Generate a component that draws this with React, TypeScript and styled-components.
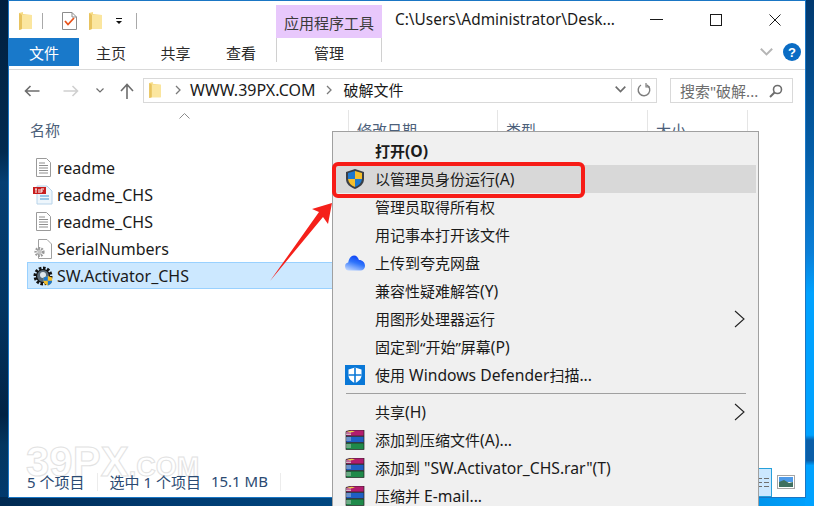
import React from 'react'
import styled, { createGlobalStyle } from 'styled-components'

const UI_FONT = `"Noto Sans", "Noto Sans CJK SC", sans-serif`

const GlobalStyle = createGlobalStyle`
  html, body {
    margin: 0;
    padding: 0;
    overflow: hidden;
  }
  body {
    font-family: ${UI_FONT};
    font-size: 15px;
  }
`

const Desktop = styled.div`
  position: relative;
  width: 814px;
  height: 506px;
  overflow: hidden;
  box-sizing: border-box;
  padding: 0 8px 8px;
  background:
    linear-gradient(180deg, #02396f 0%, #045ea8 30%, #0a7fd8 50%, #00a2ff 58%, #00a2ff 86%, #0a5ea8 87%, #0a5ea8 91%, #00a2ff 92%) right / 9px 100% no-repeat,
    linear-gradient(90deg, #002a52 0%, #003a70 20%, #00538f 60%, #00a2ff 100%) bottom / 100% 9px no-repeat,
    linear-gradient(180deg, #01203f 0%, #012a50 30%, #063f73 36%, #033562 60%, #012345 82%, #03365f 88%, #003a70 100%);
`

const Win = styled.div`
  height: 498px;
  box-sizing: border-box;
  border: 1px solid #1a76c4;
  background: #fff;
  display: flex;
  flex-direction: column;
`

const Latin = styled.span`
  font-size: 16px;
  line-height: 1;
`

const Spacer = styled.span<{ $w: number }>`
  width: ${p => p.$w}px;
  flex: none;
`

const TitleBar = styled.div`
  height: 37px;
  display: flex;
  align-items: flex-end;
  flex: none;
`

const Quick = styled.div`
  width: 267px;
  height: 37px;
  display: flex;
  align-items: center;
  padding: 3px 0 0 10px;
  box-sizing: border-box;
  flex: none;
`

const QuickSep = styled.span<{ $gap: number }>`
  width: 1px;
  height: 16px;
  background: #a9a9a9;
  margin: 0 ${p => p.$gap}px;
  flex: none;
`

const ContextTab = styled.div`
  width: 106px;
  height: 33px;
  background: #e8c8fc;
  color: #3a3a3a;
  font-size: 15px;
  display: flex;
  align-items: center;
  justify-content: center;
  padding-top: 2px;
  box-sizing: border-box;
  flex: none;
`

const TitleText = styled.div`
  margin-left: 13px;
  width: 232px;
  height: 37px;
  line-height: 37px;
  font-size: 15.4px;
  color: #1a1a1a;
  white-space: nowrap;
  flex: none;
`

const WinButtons = styled.div`
  display: flex;
  height: 37px;
  align-items: center;
  flex: none;
`

const WinButton = styled.span`
  width: 59px;
  height: 37px;
  display: flex;
  align-items: center;
  justify-content: center;
`

const RibbonTabs = styled.div`
  height: 31px;
  display: flex;
  border-bottom: 1px solid #d9d9d9;
  box-sizing: content-box;
  flex: none;
`

const FileTab = styled.div`
  width: 70px;
  height: 28px;
  background: #1979ca;
  color: #fff;
  font-size: 15px;
  display: flex;
  align-items: center;
  justify-content: center;
  flex: none;
`

const RibbonTab = styled.div<{ $w: number }>`
  width: ${p => p.$w}px;
  height: 28px;
  font-size: 15px;
  color: #2b2b2b;
  display: flex;
  align-items: center;
  justify-content: center;
  flex: none;
`

const ManageTab = styled(RibbonTab)`
  margin-left: 2px;
  border-left: 1px solid #d0d0d0;
  border-right: 1px solid #d0d0d0;
  box-sizing: border-box;
  height: 24px;
  padding-top: 5px;
`

const RibbonRight = styled.div`
  margin-left: auto;
  height: 28px;
  display: flex;
  align-items: center;
  justify-content: flex-end;
  gap: 10px;
  padding-right: 4px;
`

const NavBar = styled.div`
  height: 40px;
  display: flex;
  align-items: flex-start;
  padding-top: 8px;
  box-sizing: border-box;
  flex: none;
`

const NavIcons = styled.div`
  width: 134px;
  height: 25px;
  display: flex;
  align-items: center;
  padding-left: 15px;
  box-sizing: border-box;
  flex: none;
`

const AddressBox = styled.div`
  width: 514px;
  height: 25px;
  border: 1px solid #d9d9d9;
  box-sizing: border-box;
  display: flex;
  align-items: center;
  flex: none;
  font-size: 15px;
  line-height: 22px;
  padding-bottom: 1px;
  color: #1a1a1a;
`

const Crumb = styled.span<{ $after?: number }>`
  margin: 0 ${p => p.$after ?? 9}px 0 ${p => p.$after ?? 9}px;
  display: flex;
`

const AddressEnd = styled.div`
  margin-left: auto;
  display: flex;
  align-items: center;
  height: 100%;
`

const RefreshCell = styled.span`
  width: 24px;
  height: 100%;
  border-left: 1px solid #d9d9d9;
  margin-left: 5px;
  display: flex;
  align-items: center;
  justify-content: center;
`

const SearchBox = styled.div`
  width: 123px;
  height: 25px;
  margin-left: 13px;
  border: 1px solid #d9d9d9;
  box-sizing: border-box;
  display: flex;
  align-items: center;
  justify-content: space-between;
  padding: 0 9px;
  font-size: 15px;
  color: #6d6d6d;
  white-space: nowrap;
  flex: none;
`

const ColumnHead = styled.div`
  height: 44px;
  display: flex;
  flex: none;
  position: relative;
`

const ColumnCell = styled.div<{ $w: number; $pad: number }>`
  width: ${p => p.$w}px;
  height: 26px;
  padding: 9px 0 0 ${p => p.$pad}px;
  box-sizing: border-box;
  border-right: 1px solid #e5e5e5;
  color: #4c607a;
  font-size: 15px;
  line-height: 22px;
  white-space: nowrap;
  flex: none;
`

const SortCaret = styled.svg`
  position: absolute;
  left: 170px;
  top: 3px;
`

const FileList = styled.div`
  flex: 1;
  display: flex;
  flex-direction: column;
  padding-left: 18px;
  min-height: 0;
`

const FileRow = styled.div<{ $selected?: boolean }>`
  height: 27px;
  width: 322px;
  box-sizing: border-box;
  display: flex;
  align-items: center;
  gap: 4px;
  padding-left: 5px;
  font-size: 16px;
  color: #1a1a1a;
  background: ${p => (p.$selected ? '#cce8ff' : 'transparent')};
  border: 1px solid ${p => (p.$selected ? '#99d1ff' : 'transparent')};
`

const FileIcon = styled.span`
  width: 20px;
  display: flex;
  justify-content: center;
  flex: none;
`

const StatusBar = styled.div`
  height: 30px;
  display: flex;
  align-items: center;
  padding-left: 18px;
  font-size: 15px;
  color: #2b4a72;
  flex: none;
  position: relative;
  z-index: 1;
`

const StatusCell = styled.span<{ $gap?: number }>`
  margin-left: ${p => p.$gap ?? 0}px;
  margin-bottom: 2px;
  white-space: nowrap;

  ${Latin} {
    font-size: 15px;
  }
`

const StatusSep = styled.span`
  width: 1px;
  height: 18px;
  background: #ececec;
  margin: 0 12px;
`

const ViewButtons = styled.div`
  margin-left: auto;
  display: flex;
  align-items: center;
  height: 30px;
  padding-right: 10px;
`

const ViewSelected = styled.div`
  width: 24px;
  height: 29px;
  background: #cce8ff;
  border: 1px solid #26a0da;
  box-sizing: border-box;
  margin-right: 5px;
  display: flex;
  align-items: center;
  justify-content: flex-end;
  padding-right: 2px;
`

const Watermark = styled.div`
  position: absolute;
  left: 26px;
  top: 441px;
  display: flex;
  align-items: baseline;
  font-family: "Liberation Sans", sans-serif;
  font-weight: 700;
  color: #fff;
  -webkit-text-stroke: 1px #e2e2e2;
  pointer-events: none;
  line-height: 1;
`

const WatermarkBig = styled.span`
  font-size: 42px;
`

const WatermarkSmall = styled.span`
  font-size: 27px;
`

const Menu = styled.div`
  position: absolute;
  left: 332px;
  top: 131px;
  width: 427px;
  box-sizing: border-box;
  background: #f0f0f0;
  border: 1px solid #a0a0a0;
  padding: 5px 2px;
  z-index: 2;
`

const MenuRow = styled.div<{ $active?: boolean; $bold?: boolean }>`
  height: 28px;
  display: flex;
  align-items: center;
  background: ${p => (p.$active ? '#d8d8d8' : 'transparent')};
  font-size: 15px;
  font-weight: ${p => (p.$bold ? 700 : 400)};
  color: #1a1a1a;
  white-space: nowrap;
  position: relative;
`

const MenuIcon = styled.span`
  width: 40px;
  display: flex;
  justify-content: center;
  flex: none;
`

const MenuLabel = styled.span`
  margin-bottom: 2px;

  ${Latin} {
    font-size: 15.7px;
  }
`

const MenuChevron = styled.svg`
  position: absolute;
  right: 11px;
  top: 5px;
`

const MenuSep = styled.div`
  height: 1px;
  background: #a0a0a0;
  margin: 4px 10px 4px 11px;
`

const RedBox = styled.div`
  position: absolute;
  left: 332px;
  top: 162px;
  width: 253px;
  height: 36px;
  box-sizing: border-box;
  border: 4px solid #f71c17;
  border-radius: 6px;
  pointer-events: none;
  z-index: 3;
`

const Arrow = styled.svg`
  position: absolute;
  left: 262px;
  top: 196px;
  z-index: 3;
`

// wraps runs of latin text so they sit a size up from the CJK, as Segoe UI does next to YaHei
const mixed = (text: string) =>
  text.split(/([\u0020-\u007e]+)/).filter(Boolean).map((part, i) =>
    /^[\u0020-\u007e]+$/.test(part) ? <Latin key={i}>{part}</Latin> : part
  )

const Folder = ({ w = 13, h = 19 }: { w?: number; h?: number }) => (
  <svg width={w} height={h} viewBox="0 0 13 19">
    <path d="M0 1 L4 0 L4 2 L13 3 V17 L3 17 L0 18 Z" fill="#f7dc86" />
    <path d="M0 1 V18 L3 17 V3 Z" fill="#e8c35f" />
    <path d="M3 3 L13 3 V17 H3 Z" fill="#fbe69f" />
  </svg>
)

const CheckDoc = () => (
  <svg width="15" height="18" viewBox="0 0 15 18">
    <path d="M.5.5H10L14.5 5V17.5H.5Z" fill="#fff" stroke="#8c8c8c" />
    <path d="M10 .5V5H14.5" fill="none" stroke="#8c8c8c" />
    <path d="M3 9L6 12.5L12 6" fill="none" stroke="#e8521a" strokeWidth="1.8" />
  </svg>
)

const DropMark = () => (
  <svg width="8" height="8" viewBox="0 0 8 8">
    <rect x="1" y="1" width="6" height="1" fill="#111" />
    <path d="M1 4H7L4 7Z" fill="#111" />
  </svg>
)

const ForwardArrow = styled.svg`
  transform: scaleX(-1);
`

const UpArrow = () => (
  <svg width="14" height="16" viewBox="0 0 14 16">
    <path d="M7 16V2M1 8L7 1.5L13 8" fill="none" stroke="#6d6d6d" strokeWidth="1.6" />
  </svg>
)

const SmallChevron = ({ color = '#6d6d6d', w = 8 }: { color?: string; w?: number }) => (
  <svg width={w} height={w * 0.65} viewBox="0 0 8 5.2">
    <path d="M.5.5L4 4L7.5.5" fill="none" stroke={color} strokeWidth="1.2" />
  </svg>
)

const CrumbMark = () => (
  <svg width="6" height="10" viewBox="0 0 6 10">
    <path d="M1 1L5 5L1 9" fill="none" stroke="#7a7a7a" strokeWidth="1.3" />
  </svg>
)

const Refresh = () => (
  <svg width="14" height="14" viewBox="0 0 14 14">
    <path d="M9.6 1.8A5.8 5.8 0 1 1 4 2" fill="none" stroke="#7d7d7d" strokeWidth="1.4" />
    <path d="M9 0V4H13" fill="none" stroke="#7d7d7d" strokeWidth="1.2" />
  </svg>
)

const Magnifier = () => (
  <svg width="14" height="14" viewBox="0 0 14 14">
    <circle cx="8.5" cy="5.5" r="4" fill="none" stroke="#6d6d6d" strokeWidth="1.6" />
    <path d="M5.5 8.5L1 13" stroke="#6d6d6d" strokeWidth="2" />
  </svg>
)

const Help = () => (
  <svg width="18" height="18" viewBox="0 0 18 18">
    <circle cx="9" cy="9" r="9" fill="#0a6cc4" />
    <text x="9" y="14" textAnchor="middle" fontSize="13" fontWeight="700" fill="#fff" fontFamily="Liberation Sans">?</text>
  </svg>
)

const TextFile = () => (
  <svg width="15" height="19" viewBox="0 0 15 19">
    <path d="M.5.5H10.5L14.5 4.5V18.5H.5Z" fill="#fff" stroke="#9a9a9a" />
    <path d="M3 5H9M3 7.5H12M3 10H12M3 12.5H12M3 15H12" stroke="#8e8e8e" />
  </svg>
)

const PdfFile = () => (
  <svg width="20" height="20" viewBox="0 0 20 20">
    <path d="M4 1H14L19 6V19H4Z" fill="#eef6fc" stroke="#b8d4ea" />
    <path d="M7 11H16M7 14H16" stroke="#7fb6de" strokeWidth="1.4" />
    <rect x="0" y="2" width="13" height="7" fill="#c81e1e" />
    <path d="M2 4H4M3 4V8M6 4V8M8 4V8M8 4H11M8 6H10" stroke="#fff" strokeWidth="1" />
  </svg>
)

const ConfigFile = () => (
  <svg width="20" height="20" viewBox="0 0 20 20">
    <path d="M5.5.5H14L18.5 5V19.5H5.5Z" fill="#fff" stroke="#a0a0a0" />
    <circle cx="6.5" cy="13" r="3.6" fill="none" stroke="#9a9a9a" strokeWidth="3" strokeDasharray="1.6 1" />
    <circle cx="6.5" cy="13" r="2.2" fill="#c4c4c4" />
  </svg>
)

const Shield = ({ size = 20 }: { size?: number }) => (
  <svg width={size} height={size * 1.1} viewBox="0 0 20 22">
    <path d="M10 1L19 4V11C19 16 15 19 10 21C5 19 1 16 1 11V4Z" fill="#3a3f46" />
    <path d="M10 3V11H3V5Z" fill="#1c78cf" />
    <path d="M10 3L17 5V11H10Z" fill="#f5bf2c" />
    <path d="M3 11H10V19C6 17.5 3.5 15 3 11Z" fill="#f5bf2c" />
    <path d="M10 11H17C16.5 15 14 17.5 10 19Z" fill="#1c78cf" />
  </svg>
)

const GearApp = () => (
  <svg width="20" height="20" viewBox="0 0 20 20">
    <circle cx="10" cy="10" r="7.5" fill="none" stroke="#111" strokeWidth="4" strokeDasharray="2.4 1.5" />
    <circle cx="10" cy="10" r="6.5" fill="#5a6a78" stroke="#111" strokeWidth="1.2" />
    <circle cx="10" cy="9" r="3" fill="#dfe8ee" />
    <g transform="translate(10 9.5) scale(.48)">
      <path d="M10 1L19 4V11C19 16 15 19 10 21C5 19 1 16 1 11V4Z" fill="#f5bf2c" />
      <path d="M10 1V11H1V4Z" fill="#1c78cf" />
      <path d="M10 11H19C19 16 15 19 10 21Z" fill="#1c78cf" />
    </g>
  </svg>
)

const QuarkCloud = () => (
  <svg width="20" height="16" viewBox="0 0 20 15">
    <defs>
      <linearGradient id="quark" x1=".65" y1="0" x2=".2" y2="1">
        <stop offset="0" stopColor="#0b3df5" />
        <stop offset=".45" stopColor="#2f74fb" />
        <stop offset="1" stopColor="#bcd4ff" />
      </linearGradient>
    </defs>
    <path d="M4 15A4 4 0 0 1 3.2 7.1C4 3 6 0 9 0C11.5 0 13 2 14 4.5C17.5 4.5 20 7 20 10.5C20 13 18 15 15.5 15Z" fill="url(#quark)" />
  </svg>
)

const Defender = () => (
  <svg width="20" height="20" viewBox="0 0 20 20">
    <rect width="20" height="20" fill="#0a78d7" />
    <path d="M10 2.5L16.5 4.5V10C16.5 14 13.5 16.5 10 18C6.5 16.5 3.5 14 3.5 10V4.5Z" fill="#fff" />
    <path d="M10 2.5V18M3.5 10H16.5" stroke="#0a78d7" strokeWidth="1.6" />
  </svg>
)

const RarBooks = () => (
  <svg width="20" height="20" viewBox="0 0 20 20">
    <path d="M1 1.5L6 0H19V6H1Z" fill="#b21c6e" stroke="#222" strokeWidth=".7" />
    <path d="M2 1.5L7 .8L10 1.8L5 2.6Z" fill="#e8d04a" />
    <rect x="1" y="6.5" width="18" height="6" fill="#1f5fc4" stroke="#222" strokeWidth=".7" />
    <rect x="1" y="13" width="18" height="6.5" fill="#1f8a4a" stroke="#222" strokeWidth=".7" />
    <path d="M1 3H6M1 4.5H6M1 8H6M1 10H6M1 15H6M1 17H6" stroke="#ddd" strokeWidth=".8" />
  </svg>
)

const GridGlyph = () => (
  <svg width="10" height="11" viewBox="0 0 10 11">
    <path d="M0 1.5H3M5 1.5H10M0 5.5H3M5 5.5H10M0 9.5H3M5 9.5H10" stroke="#6f6f6f" />
  </svg>
)

const PictureGlyph = () => (
  <svg width="18" height="14" viewBox="0 0 18 14">
    <rect x=".5" y=".5" width="17" height="13" fill="#fff" stroke="#a5a5a5" />
    <rect x="2" y="2" width="14" height="5" fill="#4f9ae8" />
    <path d="M2 7L7 5L12 8L16 7V12H2Z" fill="#3f7060" />
  </svg>
)

const files = [
  { name: 'readme', icon: <TextFile /> },
  { name: 'readme_CHS', icon: <PdfFile /> },
  { name: 'readme_CHS', icon: <TextFile /> },
  { name: 'SerialNumbers', icon: <ConfigFile /> },
  { name: 'SW.Activator_CHS', icon: <GearApp />, selected: true },
]

const menuTop = [
  { label: '打开(O)', bold: true },
  { label: '以管理员身份运行(A)', icon: <Shield />, active: true },
  { label: '管理员取得所有权' },
  { label: '用记事本打开该文件' },
  { label: '上传到夸克网盘', icon: <QuarkCloud /> },
  { label: '兼容性疑难解答(Y)' },
  { label: '用图形处理器运行', more: true },
  { label: '固定到“开始”屏幕(P)' },
  { label: '使用 Windows Defender扫描...', icon: <Defender /> },
]

const menuBottom = [
  { label: '共享(H)', more: true },
  { label: '添加到压缩文件(A)...', icon: <RarBooks /> },
  { label: '添加到 "SW.Activator_CHS.rar"(T)', icon: <RarBooks /> },
  { label: '压缩并 E-mail...', icon: <RarBooks /> },
]

type MenuEntry = { label: string; icon?: React.ReactNode; bold?: boolean; active?: boolean; more?: boolean }

const renderRow = (item: MenuEntry) => (
  <MenuRow key={item.label} $active={item.active} $bold={item.bold}>
    <MenuIcon>{item.icon}</MenuIcon>
    <MenuLabel>{mixed(item.label)}</MenuLabel>
    {item.more && (
      <MenuChevron width="11" height="18" viewBox="0 0 11 18">
        <path d="M1 1L10 9L1 17" fill="none" stroke="#222" strokeWidth="1.1" />
      </MenuChevron>
    )}
  </MenuRow>
)

export default function App() {
  return (
    <Desktop>
      <GlobalStyle />
      <Win>
        <TitleBar>
          <Quick>
            <Folder />
            <QuickSep $gap={10} />
            <Spacer $w={9} />
            <CheckDoc />
            <Spacer $w={12} />
            <Folder />
            <Spacer $w={13} />
            <DropMark />
            <QuickSep $gap={13} />
          </Quick>
          <ContextTab>应用程序工具</ContextTab>
          <TitleText>C:\Users\Administrator\Desk...</TitleText>
          <WinButtons>
            <WinButton>
              <svg width="13" height="1"><rect width="13" height="1" fill="#1a1a1a" /></svg>
            </WinButton>
            <WinButton>
              <svg width="12" height="12"><rect x=".5" y=".5" width="11" height="11" fill="none" stroke="#1a1a1a" /></svg>
            </WinButton>
            <WinButton>
              <svg width="12" height="12"><path d="M.5.5L11.5 11.5M11.5.5L.5 11.5" stroke="#1a1a1a" /></svg>
            </WinButton>
          </WinButtons>
        </TitleBar>
        <RibbonTabs>
          <FileTab>文件</FileTab>
          <RibbonTab $w={64}>主页</RibbonTab>
          <RibbonTab $w={65}>共享</RibbonTab>
          <RibbonTab $w={66}>查看</RibbonTab>
          <ManageTab $w={106}>管理</ManageTab>
          <RibbonRight>
            <SmallChevron color="#b5b5b5" w={13} />
            <Help />
          </RibbonRight>
        </RibbonTabs>
        <NavBar>
          <NavIcons>
            <svg width="16" height="12" viewBox="0 0 16 12">
              <path d="M15.5 6H1.5M6.5 1L1.5 6L6.5 11" fill="none" stroke="#6d6d6d" strokeWidth="1.6" />
            </svg>
            <Spacer $w={23} />
            <ForwardArrow width="16" height="12" viewBox="0 0 16 12">
              <path d="M15.5 6H1.5M6.5 1L1.5 6L6.5 11" fill="none" stroke="#d0d0d0" strokeWidth="1.6" />
            </ForwardArrow>
            <Spacer $w={17} />
            <SmallChevron />
            <Spacer $w={16} />
            <UpArrow />
          </NavIcons>
          <AddressBox>
            <Spacer $w={5} />
            <Folder w={12} h={17} />
            <Spacer $w={5} />
            <Crumb><CrumbMark /></Crumb>
            <Latin>WWW.39PX.COM</Latin>
            <Crumb $after={11}><CrumbMark /></Crumb>
            破解文件
            <AddressEnd>
              <SmallChevron w={11} />
              <RefreshCell><Refresh /></RefreshCell>
            </AddressEnd>
          </AddressBox>
          <SearchBox>
            <span>搜索"破解...</span>
            <Magnifier />
          </SearchBox>
        </NavBar>
        <ColumnHead>
          <ColumnCell $w={340} $pad={21}>名称</ColumnCell>
          <ColumnCell $w={149} $pad={8}>修改日期</ColumnCell>
          <ColumnCell $w={150} $pad={8}>类型</ColumnCell>
          <ColumnCell $w={100} $pad={8}>大小</ColumnCell>
          <SortCaret width="11" height="6" viewBox="0 0 11 6">
            <path d="M.5 5.5L5.5.5L10.5 5.5" fill="none" stroke="#8a8a8a" />
          </SortCaret>
        </ColumnHead>
        <FileList>
          {files.map((f, i) => (
            <FileRow key={i} $selected={f.selected}>
              <FileIcon>{f.icon}</FileIcon>
              {f.name}
            </FileRow>
          ))}
        </FileList>
        <StatusBar>
          <StatusCell>{mixed('5 个项目')}</StatusCell>
          <StatusSep />
          <StatusCell>{mixed('选中 1 个项目')}</StatusCell>
          <StatusCell $gap={10}>{mixed('15.1 MB')}</StatusCell>
          <StatusSep />
          <ViewButtons>
            <ViewSelected><GridGlyph /></ViewSelected>
            <PictureGlyph />
          </ViewButtons>
        </StatusBar>
      </Win>
      <Watermark>
        <WatermarkBig>39PX</WatermarkBig>
        <WatermarkSmall>.COM</WatermarkSmall>
      </Watermark>
      <Menu>
        {menuTop.map(renderRow)}
        <MenuSep />
        {menuBottom.map(renderRow)}
      </Menu>
      <RedBox />
      <Arrow width="74" height="90" viewBox="0 0 74 90">
        <path d="M8 85L57 16L50 13L70 7L66 28L61 21Z" fill="#f5201a" />
      </Arrow>
    </Desktop>
  )
}
